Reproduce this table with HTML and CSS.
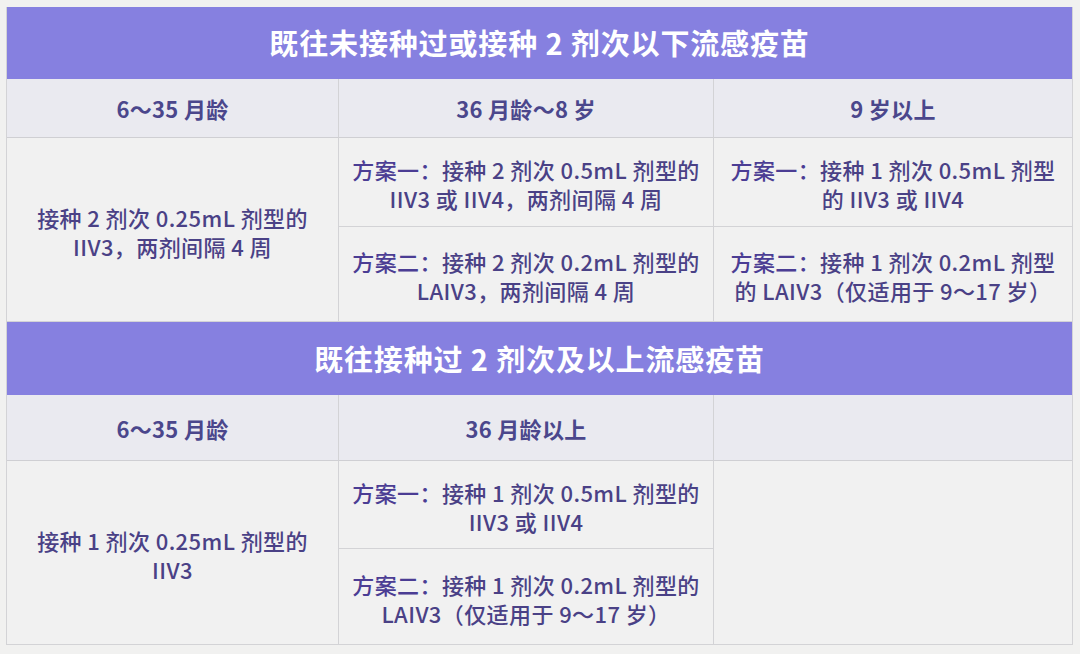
FILE: index.html
```html
<!DOCTYPE html>
<html lang="zh-CN">
<head>
<meta charset="utf-8">
<link rel="stylesheet" href="styles.css">
</head>
<body>
<div class="sheet">
  <section class="block block-a">
    <div class="title">既往未接种过或接种 2 剂次以下流感疫苗</div>
    <div class="head">6～35 月龄</div>
    <div class="head">36 月龄～8 岁</div>
    <div class="head last">9 岁以上</div>
    <div class="cell span">接种 2 剂次 0.25mL 剂型的<br>IIV3，两剂间隔 4 周</div>
    <div class="cell"><span><b>方案一：</b>接种 2 剂次 0.5mL 剂型的<br>IIV3 或 IIV4，两剂间隔 4 周</span></div>
    <div class="cell last"><span><b>方案一：</b>接种 1 剂次 0.5mL 剂型<br>的 IIV3 或 IIV4</span></div>
    <div class="cell bottom"><span><b>方案二：</b>接种 2 剂次 0.2mL 剂型的<br>LAIV3，两剂间隔 4 周</span></div>
    <div class="cell bottom last"><span><b>方案二：</b>接种 1 剂次 0.2mL 剂型<br>的 LAIV3（仅适用于 9～17 岁）</span></div>
  </section>
  <section class="block block-b">
    <div class="title">既往接种过 2 剂次及以上流感疫苗</div>
    <div class="head">6～35 月龄</div>
    <div class="head">36 月龄以上</div>
    <div class="head last"></div>
    <div class="cell span">接种 1 剂次 0.25mL 剂型的<br>IIV3</div>
    <div class="cell"><span><b>方案一：</b>接种 1 剂次 0.5mL 剂型的<br>IIV3 或 IIV4</span></div>
    <div class="cell blank last"></div>
    <div class="cell bottom"><span><b>方案二：</b>接种 1 剂次 0.2mL 剂型的<br>LAIV3（仅适用于 9～17 岁）</span></div>
  </section>
</div>
</body>
</html>
```
FILE: styles.css
```css
html, body {
  margin: 0;
  padding: 0;
  background: #f1f1f0;
}

body {
  font-family: "Noto Sans CJK SC", "Noto Sans", sans-serif;
  color: #4a4186;
}

.sheet {
  width: 1067px;
  margin: 7px 0 0 6px;
  border: 1px solid #d3d3d6;
  border-top: none;
  box-sizing: border-box;
}

.block {
  display: grid;
  grid-template-columns: 332px 375px 358px;
}

.block-a {
  grid-template-rows: 72px 59px 89px 94px;
}

.block-b {
  grid-template-rows: 73px 66px 88px 95px;
  border-top: 1px solid #d3d3d6;
}

.title {
  grid-column: 1 / -1;
  background: #8680e0;
  color: #ffffff;
  font-size: 29px;
  font-weight: 700;
  display: flex;
  align-items: center;
  justify-content: center;
  letter-spacing: 0.85px;
  padding-bottom: 2px;
}

.head {
  background: #eaeaf0;
  display: flex;
  align-items: center;
  justify-content: center;
  font-size: 22px;
  font-weight: 700;
  color: #4b478c;
  letter-spacing: 0.3px;
  border-right: 1px solid #d3d3d6;
  border-bottom: 1px solid #cfcfd3;
}

.cell {
  background: #f1f1f1;
  display: flex;
  align-items: center;
  justify-content: center;
  text-align: center;
  font-size: 22px;
  font-weight: 500;
  line-height: 29px;
  letter-spacing: 0.4px;
  white-space: nowrap;
  border-right: 1px solid #d3d3d6;
  border-bottom: 1px solid #d3d3d6;
  padding-top: 4px;
  box-sizing: border-box;
}

.cell b {
  font-weight: 500;
  color: #4b3d94;
}

.span {
  grid-row: span 2;
  border-bottom: none;
}

.bottom {
  border-bottom: none;
}

.blank {
  grid-row: span 2;
  border-bottom: none;
}

.last {
  border-right: none;
}
```
